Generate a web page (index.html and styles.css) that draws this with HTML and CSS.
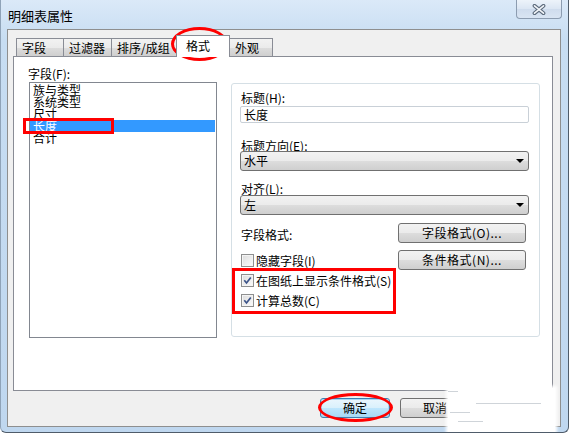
FILE: index.html
```html
<!DOCTYPE html>
<html lang="zh-CN">
<head>
    <meta charset="UTF-8">
    <title>明细表属性</title>
    <link rel="stylesheet" href="styles.css">
</head>
<body>

<div class="window">
    <div class="titlebar">
        <span class="title">明细表属性</span>
        <div class="close-btn">
            <svg width="14" height="11" viewBox="0 0 14 11">
                <path d="M2.5 1.8 L11.5 9.2 M11.5 1.8 L2.5 9.2" stroke="#5d6b7c" stroke-width="3.8" stroke-linecap="round"/>
                <path d="M2.5 1.8 L11.5 9.2 M11.5 1.8 L2.5 9.2" stroke="#f3f6fa" stroke-width="1.6" stroke-linecap="round"/>
            </svg>
        </div>
    </div>

    <div class="client">
        <div class="tabs">
            <div class="tab tab-fields">字段</div>
            <div class="tab tab-filter">过滤器</div>
            <div class="tab tab-sort">排序/成组</div>
            <div class="tab tab-format selected">格式</div>
            <div class="tab tab-look">外观</div>
        </div>

        <div class="tab-panel">
            <div class="fields-col">
                <div class="label">字段(F):</div>
                <div class="listbox">
                    <div class="item">族与类型</div>
                    <div class="item">系统类型</div>
                    <div class="item">尺寸</div>
                    <div class="item selected">长度</div>
                    <div class="item">合计</div>
                </div>
            </div>

            <div class="group">
                <div class="glabel">标题(H):</div>
                <div class="textbox">长度</div>

                <div class="glabel gap-orient">标题方向(E):</div>
                <div class="combo">水平<span class="arrow"></span></div>

                <div class="glabel gap-align">对齐(L):</div>
                <div class="combo combo-align">左<span class="arrow"></span></div>

                <div class="row row-first">
                    <span class="row-text">字段格式:</span>
                    <button class="btn wide">字段格式(O)...</button>
                </div>
                <div class="row row-second">
                    <label class="check"><span class="box"></span>隐藏字段(I)</label>
                    <button class="btn wide">条件格式(N)...</button>
                </div>
                <div class="row">
                    <label class="check"><span class="box checked">
                        <svg width="9" height="9" viewBox="0 0 9 9"><path d="M1.3 4.3 L3.5 7 L7.8 1.4" fill="none" stroke="#3c5489" stroke-width="1.7"/></svg>
                    </span>在图纸上显示条件格式(S)</label>
                </div>
                <div class="row">
                    <label class="check"><span class="box checked">
                        <svg width="9" height="9" viewBox="0 0 9 9"><path d="M1.3 4.3 L3.5 7 L7.8 1.4" fill="none" stroke="#3c5489" stroke-width="1.7"/></svg>
                    </span>计算总数(C)</label>
                </div>
            </div>
        </div>

        <div class="buttons">
            <button class="btn dialog default">确定</button>
            <button class="btn dialog">取消</button>
            <button class="btn dialog">帮助</button>
        </div>
    </div>

    <!-- red annotations drawn over the dialog -->
    <div class="mark ellipse mark-tab"></div>
    <div class="mark mark-item"></div>
    <div class="mark mark-checks"></div>
    <div class="mark ellipse mark-ok"></div>

    <!-- erased watermark -->
    <div class="smudge">
        <span class="streak streak-a"></span>
        <span class="streak streak-b"></span>
        <span class="streak streak-c"></span>
        <span class="streak streak-d"></span>
    </div>
</div>

</body>
</html>
```

FILE: styles.css
```css
* {
    box-sizing: border-box;
}
body {
    margin: 0;
    font-family: "Noto Sans CJK SC", "DejaVu Sans", sans-serif;
    font-size: 12px;
    color: #000;
    background: #fff;
}
.window {
    position: relative;
    width: 569px;
    height: 433px;
    background: linear-gradient(#dbe9f8, #c7ddf2 40px, #bfd7ef);
    border-left: 1px solid #8fa3b8;
    border-right: 1px solid #4f5c6a;
    border-bottom: 1px solid #4f5c6a;
    border-radius: 0 0 6px 6px;
    overflow: hidden;
}
.titlebar {
    height: 29px;
    display: flex;
    justify-content: space-between;
    align-items: flex-start;
}
.title {
    font-size: 13px;
    line-height: 13px;
    padding: 9px 0 0 7px;
}
.close-btn {
    width: 46px;
    height: 19px;
    margin-right: 6px;
    border: 1px solid #8c9cb0;
    border-top: none;
    border-radius: 0 0 4px 4px;
    background: linear-gradient(#edf3fa, #dbe6f3 50%, #cfdced 51%, #d9e5f3);
    display: flex;
    align-items: center;
    justify-content: center;
}
.client {
    margin-left: 6px;
    width: 554px;
    height: 398px;
    border: 1px solid #8e8f8f;
    background: #f0f0f0;
}

/* tabs */
.tabs {
    display: flex;
    align-items: flex-end;
    height: 21px;
    margin: 5px 0 0 8px;
}
.tab {
    height: 18px;
    line-height: 17px;
    padding-left: 5px;
    margin-left: -1px;
    border: 1px solid #898c95;
    border-bottom: none;
    background: linear-gradient(#f2f2f2, #ebebeb 50%, #dddddd 51%, #cfcfcf);
    white-space: nowrap;
}
.tab-fields { width: 48px; margin-left: 0; }
.tab-filter { width: 49px; }
.tab-sort { width: 66px; }
.tab-format { width: 54px; padding-left: 9px; }
.tab-look { width: 44px; }
.tab.selected {
    position: relative;
    z-index: 1;
    height: 22px;
    line-height: 20px;
    margin-bottom: -1px;
    background: #fff;
}
.tab-panel {
    display: flex;
    align-items: flex-start;
    margin-left: 5px;
    width: 540px;
    height: 335px;
    border: 1px solid #898c95;
    background: #fff;
}

/* field list */
.fields-col {
    padding: 11px 0 0 14px;
}
.label {
    line-height: 12px;
}
.listbox {
    margin: 2px 0 0 1px;
    width: 188px;
    height: 256px;
    border: 1px solid #828790;
    padding: 1px 1px 0 0;
}
.item {
    height: 12px;
    line-height: 12px;
    padding-left: 3px;
}
.item.selected {
    background: #3399ff;
    color: #fff;
}

/* format group */
.group {
    margin: 26px 0 0 14px;
    width: 309px;
    height: 254px;
    border: 1px solid #d5dfe5;
    border-radius: 3px;
    padding: 9px 10px 0 8px;
}
.glabel {
    line-height: 10px;
    padding-left: 1px;
}
.gap-orient { margin-top: 18px; }
.gap-align { margin-top: 13px; }
.textbox {
    margin-top: 3px;
    height: 17px;
    line-height: 15px;
    padding-left: 3px;
    border: 1px solid #c9d0d7;
    border-radius: 2px;
    background: #fff;
}
.combo {
    position: relative;
    height: 20px;
    line-height: 18px;
    padding-left: 3px;
    border: 1px solid #707070;
    border-radius: 3px;
    background: linear-gradient(#f2f2f2, #ebebeb 50%, #dddddd 51%, #cfcfcf);
}
.combo-align { margin-top: 1px; }
.arrow {
    position: absolute;
    right: 4px;
    top: 7px;
    border-left: 4px solid transparent;
    border-right: 4px solid transparent;
    border-top: 4px solid #000;
}
.row {
    display: flex;
    justify-content: space-between;
    align-items: center;
    height: 20px;
}
.row-first { margin-top: 8px; }
.row-second { margin-top: 7px; }
.row-text {
    padding: 3px 0 0 1px;
}
.btn {
    height: 20px;
    padding: 0;
    font: inherit;
    line-height: 18px;
    color: #000;
    border: 1px solid #707070;
    border-radius: 3px;
    background: linear-gradient(#f2f2f2, #ebebeb 50%, #dddddd 51%, #cfcfcf);
}
.btn.wide {
    width: 128px;
    margin-right: 3px;
    letter-spacing: 0.5px;
}
.check {
    display: flex;
    align-items: center;
    gap: 2px;
    padding-left: 1px;
}
.box {
    width: 13px;
    height: 13px;
    border: 1px solid #8e8f8f;
    background: linear-gradient(135deg, #dcdcdc, #fbfbfb);
    box-shadow: inset 0 0 0 1px #f4f4f4;
    display: flex;
    align-items: center;
    justify-content: center;
}

/* dialog buttons */
.buttons {
    display: flex;
    justify-content: flex-end;
    gap: 10px;
    margin-top: 7px;
    padding-right: 10px;
}
.btn.dialog {
    width: 70px;
}
.btn.default {
    border-color: #3c7fb1;
    box-shadow: inset 0 0 0 1px #a6d8f5;
    background: linear-gradient(#eaf6fd, #d9f0fc 50%, #bee6fd 51%, #a7d9f5);
}

/* annotations */
.mark {
    position: absolute;
    border: 3px solid #f00;
}
.ellipse {
    border-radius: 50%;
}
.mark-tab { left: 170px; top: 27px; width: 57px; height: 34px; }
.mark-item { left: 22px; top: 118px; width: 91px; height: 16px; }
.mark-checks { left: 231px; top: 268px; width: 164px; height: 46px; }
.mark-ok { left: 317px; top: 393px; width: 75px; height: 29px; }

.smudge {
    position: absolute;
    left: 447px;
    top: 388px;
    width: 107px;
    height: 45px;
    background: #fff;
    box-shadow: 0 0 3px 2px #fff;
}
.streak {
    position: absolute;
    height: 1px;
    background: #cfd4d9;
}
.streak-a { left: 0; top: 3px; width: 10px; }
.streak-b { left: 28px; top: 15px; width: 65px; }
.streak-c { left: 2px; top: 24px; width: 20px; }
.streak-d { left: 10px; top: 33px; width: 25px; }
```
